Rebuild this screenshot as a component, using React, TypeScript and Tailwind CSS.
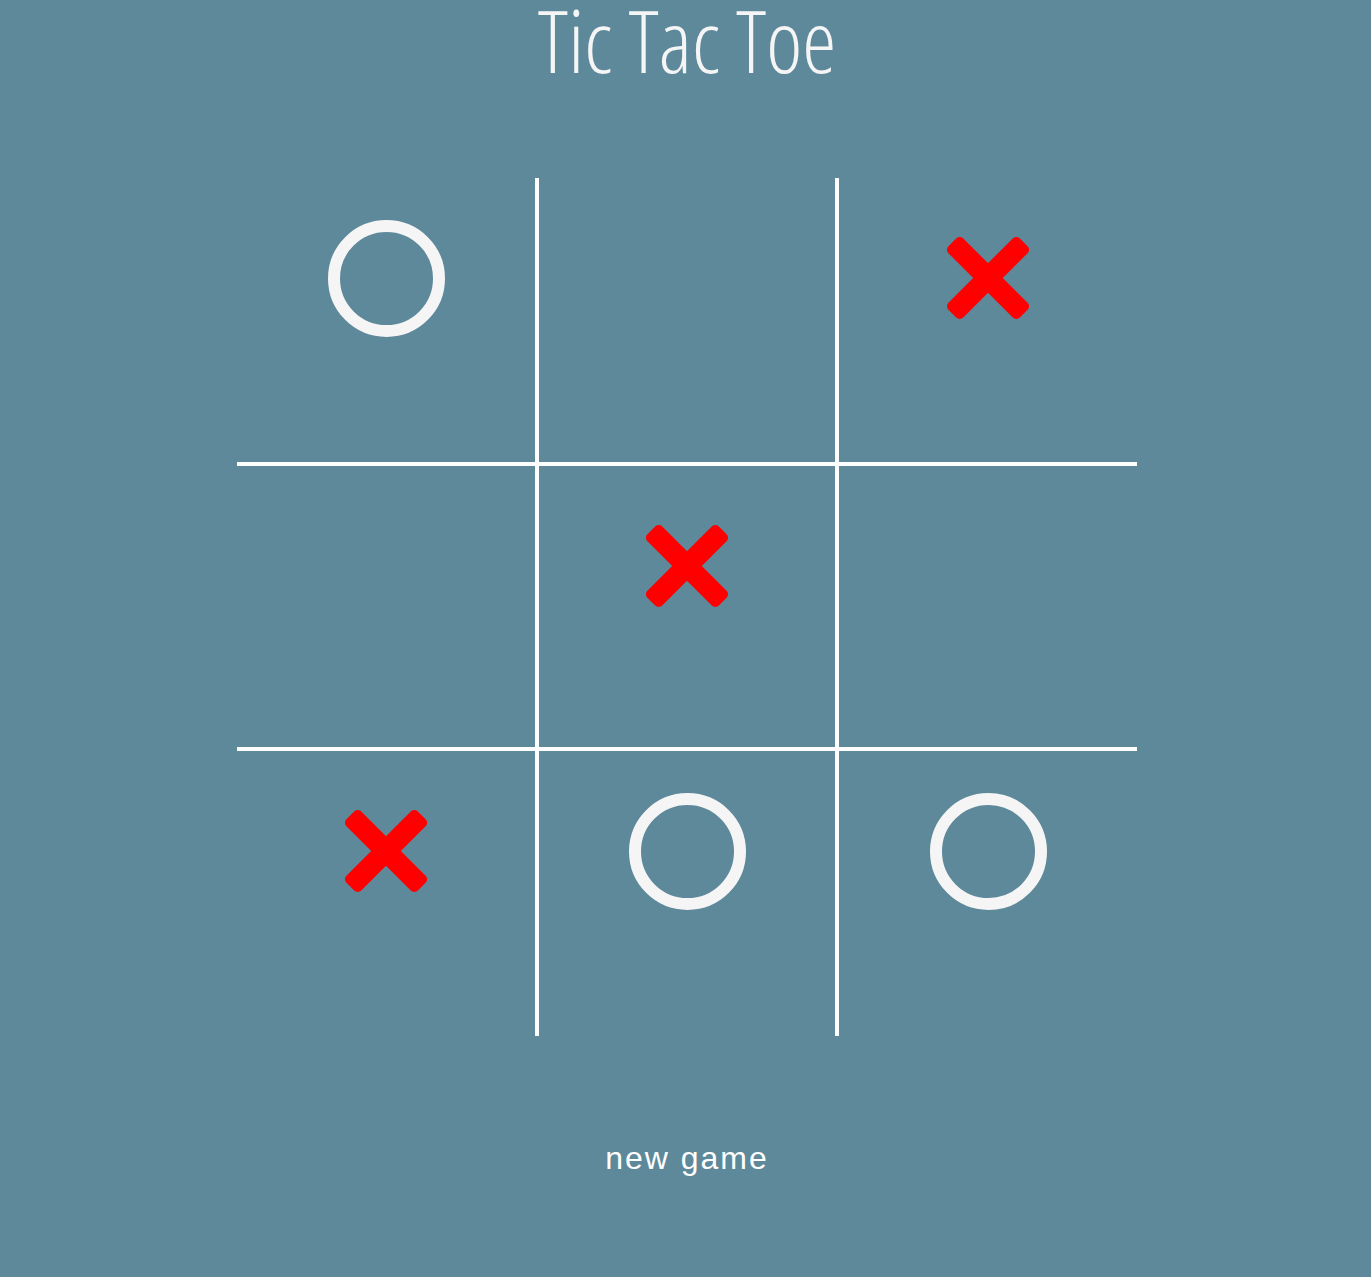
import { useState } from "react";

type Mark = "x" | "o" | null;

const START: Mark[] = ["o", null, "x", null, "x", null, "x", "o", "o"];
const ROW_H = ["h-[286px]", "h-[285px]", "h-[287px]"];

function Ring() {
  return (
    <svg width="117" height="117" viewBox="0 0 117 117">
      <circle cx="58.5" cy="58.5" r="52.5" fill="none" stroke="#f5f5f5" strokeWidth="12" />
    </svg>
  );
}

function Cross() {
  return (
    <svg width="82" height="82" viewBox="-41 -41 82 82" overflow="visible">
      <rect x="-50.5" y="-10.5" width="101" height="21" rx="5" fill="#ff0000" transform="rotate(45)" />
      <rect x="-50.5" y="-10.5" width="101" height="21" rx="5" fill="#ff0000" transform="rotate(-45)" />
    </svg>
  );
}

export default function App() {
  const [cells, setCells] = useState<Mark[]>(START);

  const borders = (i: number) => {
    const col = i % 3;
    const row = Math.floor(i / 3);
    return [
      col > 0 ? "border-l-2" : "",
      col < 2 ? "border-r-2" : "",
      row > 0 ? "border-t-2" : "",
      row < 2 ? "border-b-2" : "",
    ].join(" ");
  };

  return (
    <div className="min-h-[1277px] w-full bg-[#5e899b] pl-[3px] text-white">
      <h1 className="h-[79px] text-center font-['Open_Sans',sans-serif] text-[86px] leading-[79px] font-light font-stretch-condensed text-[#f5f5f5]">
        Tic Tac Toe
      </h1>

      <div className="mx-auto mt-[99px] grid w-[900px] grid-cols-3">
        {cells.map((m, i) => (
          <div
            key={i}
            className={`${ROW_H[Math.floor(i / 3)]} ${borders(i)} flex items-start justify-center border-white`}
          >
            <div className="flex h-[200px] items-center justify-center">
              {m === "o" && <Ring />}
              {m === "x" && <Cross />}
            </div>
          </div>
        ))}
      </div>

      <div className="mt-[102px] flex justify-center">
        <button
          onClick={() => setCells(Array(9).fill(null))}
          className="h-[40px] font-['Liberation_Sans',Arial,sans-serif] text-[32px] leading-[40px] tracking-[2px] text-white"
        >
          new game
        </button>
      </div>
    </div>
  );
}
